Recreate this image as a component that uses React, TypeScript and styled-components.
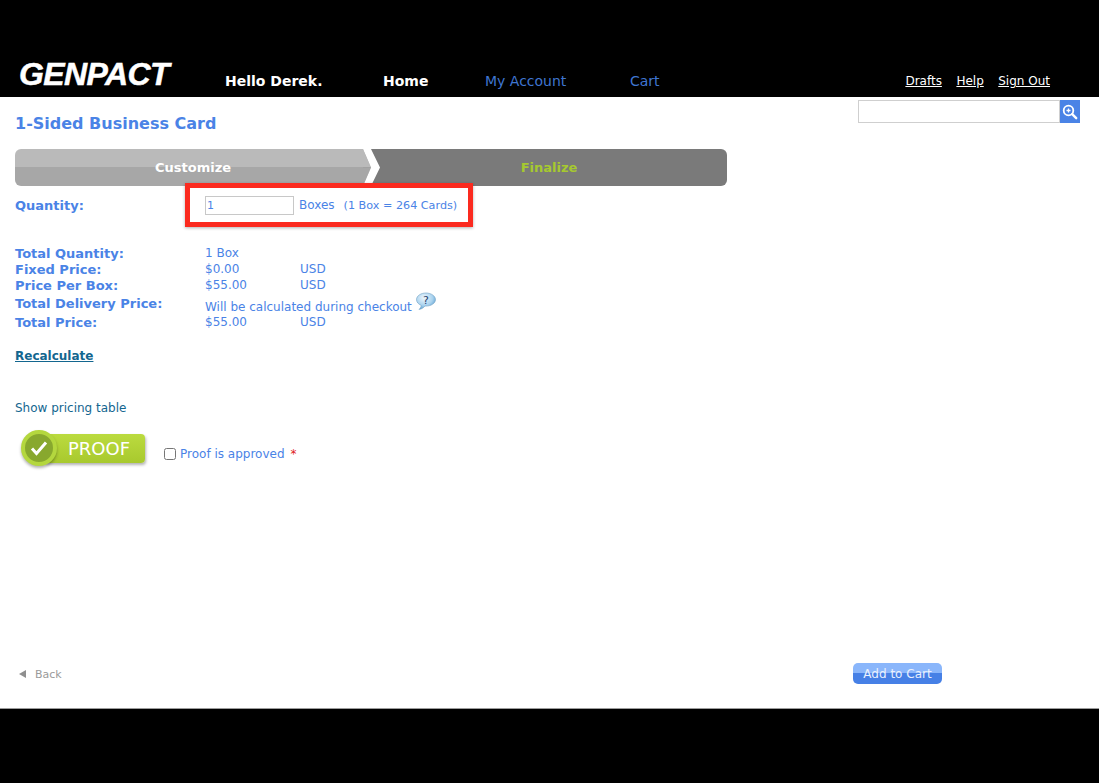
import React from "react";
import styled, { createGlobalStyle } from "styled-components";

const blue = "#4a83e6";
const teal = "#13668f";

const GlobalStyle = createGlobalStyle`
    html, body {
        margin: 0;
        padding: 0;
        background: #000;
    }
    body {
        font-family: "DejaVu Sans", Verdana, sans-serif;
        font-size: 12px;
        color: ${blue};
    }
`;

const priceRows = [
    { label: "Total Quantity:", value: "1 Box" },
    { label: "Fixed Price:", value: "$0.00", unit: "USD" },
    { label: "Price Per Box:", value: "$55.00", unit: "USD" },
];

const App: React.FC = () => {
    return (
        <Page>
            <GlobalStyle />
            <Header>
                <Logo>GENPACT</Logo>
                <Nav>
                    <Greeting>Hello Derek.</Greeting>
                    <NavLink $active $width={102}>Home</NavLink>
                    <NavLink $width={145}>My Account</NavLink>
                    <NavLink>Cart</NavLink>
                </Nav>
                <UtilityNav>
                    <UtilityLink>Drafts</UtilityLink>
                    <UtilityLink>Help</UtilityLink>
                    <UtilityLink>Sign Out</UtilityLink>
                </UtilityNav>
            </Header>
            <Main>
                <Content>
                    <Title>1-Sided Business Card</Title>
                    <Steps>
                        <StepDone>Customize</StepDone>
                        <StepArrow viewBox="0 0 17 37" preserveAspectRatio="none">
                            <polygon points="0,0 8,18.5 0,18.5" fill="#bababa" />
                            <polygon points="0,18.5 8,18.5 0,37" fill="#a7a7a7" />
                            <polygon points="0,0 8,0 17,18.5 8,37 0,37 8,18.5" fill="#fff" />
                        </StepArrow>
                        <StepNext>Finalize</StepNext>
                    </Steps>
                    <QuantityRow>
                        <Label>Quantity:</Label>
                        <QuantityField>
                            <QuantityInput defaultValue="1" />
                            <span>Boxes</span>
                            <QuantityHint>(1 Box = 264 Cards)</QuantityHint>
                        </QuantityField>
                    </QuantityRow>
                    <Prices>
                        {priceRows.map((row) => (
                            <PriceRow key={row.label}>
                                <Label>{row.label}</Label>
                                <PriceValue>{row.value}</PriceValue>
                                <span>{row.unit}</span>
                            </PriceRow>
                        ))}
                        <DeliveryRow>
                            <DeliveryLabel>Total Delivery Price:</DeliveryLabel>
                            <DeliveryValue>Will be calculated during checkout</DeliveryValue>
                            <HelpIcon viewBox="0 0 22 20">
                                <defs>
                                    <radialGradient id="bubble" cx="40%" cy="30%" r="75%">
                                        <stop offset="0" stopColor="#eef7fd" />
                                        <stop offset="0.6" stopColor="#a9d2ee" />
                                        <stop offset="1" stopColor="#4f97cc" />
                                    </radialGradient>
                                </defs>
                                <path d="M11 1C5.8 1 1.500 3.900 1.500 7.600c0 2.500 1.900 4.600 4.700 5.800-.2 1.600-1 3-2.200 4 2.500-.3 4.500-1.500 6-3.400.3 0 .7.100 1 .100 5.200 0 9.500-2.900 9.500-6.500S16.200 1 11 1z" fill="url(#bubble)" stroke="#6f9fc2" strokeWidth="0.6" />
                                <text x="11" y="11.500" textAnchor="middle" fontSize="11" fontWeight="400" fill="#27406b" fontFamily="DejaVu Sans, sans-serif">?</text>
                            </HelpIcon>
                        </DeliveryRow>
                        <PriceRow>
                            <Label>Total Price:</Label>
                            <PriceValue>$55.00</PriceValue>
                            <span>USD</span>
                        </PriceRow>
                    </Prices>
                    <Recalculate>Recalculate</Recalculate>
                    <PricingTable>Show pricing table</PricingTable>
                    <ProofRow>
                        <ProofBadge>
                            <ProofCircle>
                                <svg width="20" height="18" viewBox="0 0 20 18">
                                    <path d="M3 9.500l4.500 5L17 3.500" fill="none" stroke="#fff" strokeWidth="3" />
                                </svg>
                            </ProofCircle>
                            <ProofText>PROOF</ProofText>
                        </ProofBadge>
                        <ProofLabel>
                            <ProofCheck type="checkbox" />
                            Proof is approved<Required>*</Required>
                        </ProofLabel>
                    </ProofRow>
                    <Actions>
                        <BackLink>
                            <BackArrow />
                            Back
                        </BackLink>
                        <AddToCart>Add to Cart</AddToCart>
                    </Actions>
                </Content>
                <SearchBar>
                    <SearchInput />
                    <SearchButton>
                        <svg width="16" height="16" viewBox="0 0 16 16">
                            <circle cx="6.500" cy="6.500" r="4.800" fill="none" stroke="#fff" strokeWidth="1.800" />
                            <path d="M4.500 6.500h4M6.500 4.500v4" stroke="#fff" strokeWidth="1.300" />
                            <path d="M10.200 10.200l4 4" stroke="#fff" strokeWidth="2.400" strokeLinecap="round" />
                        </svg>
                    </SearchButton>
                </SearchBar>
            </Main>
            <Footer />
        </Page>
    );
};

const Page = styled.div`
    display: flex;
    flex-direction: column;
    width: 1099px;
    height: 783px;
    overflow: hidden;
    background: #000;
`;

const Header = styled.header`
    display: flex;
    align-items: flex-end;
    height: 97px;
    flex-shrink: 0;
    background: #000;
    color: #fff;
`;

const Logo = styled.div`
    width: 225px;
    padding: 0 0 6px 19px;
    box-sizing: border-box;
    font-family: "Liberation Sans", Arial, sans-serif;
    font-size: 32px;
    line-height: 34px;
    font-weight: 700;
    font-style: italic;
    letter-spacing: -0.6px;
    -webkit-text-stroke: 0.5px #fff;
`;

const Nav = styled.nav`
    display: flex;
    flex: 1;
    padding-bottom: 7px;
    font-size: 14px;
    line-height: 18px;
`;

const Greeting = styled.span`
    width: 158px;
    font-weight: 700;
`;

const NavLink = styled.a<{ $active?: boolean; $width?: number }>`
    width: ${(props) => (props.$width ? `${props.$width}px` : "auto")};
    font-weight: ${(props) => (props.$active ? 700 : 400)};
    color: ${(props) => (props.$active ? "#fff" : "#3f75d1")};
`;

const UtilityNav = styled.div`
    display: flex;
    gap: 14.500px;
    padding: 0 49px 8px 0;
    line-height: 16px;
`;

const UtilityLink = styled.a`
    color: #fff;
    text-decoration: underline;
`;

const Main = styled.main`
    display: grid;
    grid-template-columns: 1fr;
    height: 611px;
    flex-shrink: 0;
    background: #fff;
`;

const Content = styled.div`
    grid-area: 1 / 1;
    display: flex;
    flex-direction: column;
    width: 942px;
    padding-left: 15px;
    box-sizing: border-box;
`;

const Title = styled.h1`
    margin: 17px 0 15px;
    font-size: 16px;
    line-height: 20px;
    font-weight: 700;
    color: ${blue};
`;

const Steps = styled.div`
    display: flex;
    width: 712px;
    height: 37px;
    flex-shrink: 0;
    font-size: 13px;
    line-height: 37px;
    font-weight: 700;
    text-align: center;
`;

const StepDone = styled.div`
    width: 348px;
    padding-left: 8px;
    box-sizing: border-box;
    border-radius: 6px 0 0 6px;
    background: linear-gradient(#bababa 0 50%, #a7a7a7 50% 100%);
    color: #fff;
`;

const StepArrow = styled.svg`
    display: block;
    width: 17px;
    height: 37px;
    flex-shrink: 0;
    background: #7a7a7a;
`;

const StepNext = styled.div`
    flex: 1;
    padding-right: 9px;
    border-radius: 0 6px 6px 0;
    background: #7a7a7a;
    color: #a6c92f;
`;

const QuantityRow = styled.div`
    display: flex;
    align-items: center;
    height: 38px;
    flex-shrink: 0;
`;

const Label = styled.span`
    width: 190px;
    flex-shrink: 0;
    font-size: 13px;
    font-weight: 700;
    color: ${blue};
`;

const QuantityField = styled.div`
    position: relative;
    display: flex;
    align-items: center;
    font-size: 12px;

    &::after {
        content: "";
        position: absolute;
        left: -20px;
        top: -13px;
        width: 278px;
        height: 34px;
        border: 5px solid #fb2a1f;
        box-shadow: 0 1px 3px rgba(0, 0, 0, 0.3);
        pointer-events: none;
    }
`;

const QuantityInput = styled.input`
    width: 85px;
    height: 17px;
    margin: 0 5px 0 0;
    padding: 0 1px;
    border: 1px solid #c8c8c8;
    outline: none;
    font-family: inherit;
    font-size: 11px;
    color: ${blue};
`;

const QuantityHint = styled.span`
    margin-left: 9px;
    font-size: 11.200px;
`;

const Prices = styled.div`
    display: flex;
    flex-direction: column;
    margin-top: 21px;
`;

const PriceRow = styled.div`
    display: flex;
    align-items: center;
    height: 16px;
`;

const PriceValue = styled.span`
    width: 95px;
`;

const DeliveryRow = styled.div`
    display: flex;
    height: 21px;
    align-items: flex-start;
`;

const DeliveryLabel = styled(Label)`
    margin-top: 3px;
`;

const DeliveryValue = styled.span`
    margin-top: 7px;
`;

const HelpIcon = styled.svg`
    width: 22px;
    height: 20px;
    margin: -1px 0 0 3px;
`;

const Recalculate = styled.a`
    margin-top: 18px;
    font-size: 12px;
    line-height: 16px;
    font-weight: 700;
    color: ${teal};
    text-decoration: underline;
`;

const PricingTable = styled.a`
    margin-top: 36px;
    line-height: 16px;
    color: ${teal};
`;

const ProofRow = styled.div`
    display: flex;
    align-items: center;
    margin-top: 13px;
    padding-left: 6px;
`;

const ProofBadge = styled.div`
    display: flex;
    align-items: center;
    width: 124px;
    margin-right: 1px;
    height: 38px;
    flex-shrink: 0;
`;

const ProofCircle = styled.div`
    display: flex;
    align-items: center;
    justify-content: center;
    width: 28px;
    height: 28px;
    flex-shrink: 0;
    border: 4px solid #b4d73e;
    border-radius: 50%;
    background: #88a82e;
    box-shadow: 0 2px 3px rgba(0, 0, 0, 0.3);
    z-index: 1;
`;

const ProofText = styled.div`
    flex: 1;
    height: 29px;
    margin-left: -12px;
    padding-left: 23px;
    border-radius: 0 4px 4px 0;
    background: linear-gradient(#bbdb3f, #a8c92e);
    box-shadow: 1px 2px 3px rgba(0, 0, 0, 0.3);
    font-size: 18px;
    line-height: 29px;
    color: #fff;
`;

const ProofLabel = styled.label`
    display: flex;
    align-items: center;
    margin: 12px 0 0 18px;
    white-space: pre;
`;

const ProofCheck = styled.input`
    width: 12px;
    height: 12px;
    margin: 0 4px 0 0;
`;

const Required = styled.span`
    margin-left: 6px;
    color: #e02020;
`;

const Actions = styled.div`
    display: flex;
    justify-content: space-between;
    align-items: center;
    margin-top: auto;
    margin-bottom: 24px;
`;

const BackLink = styled.a`
    display: flex;
    align-items: center;
    gap: 9px;
    margin: 1px 0 0 4px;
    font-size: 11px;
    color: #9a9a9a;
`;

const BackArrow = styled.span`
    width: 0;
    height: 0;
    border-top: 4px solid transparent;
    border-bottom: 4px solid transparent;
    border-right: 7px solid #8f8f8f;
`;

const AddToCart = styled.button`
    width: 89px;
    height: 21px;
    padding: 0;
    border: none;
    border-radius: 5px;
    background: linear-gradient(#8ab6fb 0 50%, #4680e6 50% 100%);
    font-family: inherit;
    font-size: 12px;
    color: #eaf1fd;
`;

const SearchBar = styled.div`
    grid-area: 1 / 1;
    justify-self: end;
    align-self: start;
    display: flex;
    margin: 3px 19px 0 0;
`;

const SearchInput = styled.input`
    width: 200px;
    height: 21px;
    padding: 0;
    border: 1px solid #cfcfcf;
    outline: none;
`;

const SearchButton = styled.button`
    display: flex;
    align-items: center;
    justify-content: center;
    width: 20px;
    height: 23px;
    padding: 0;
    border: none;
    background: ${blue};
`;

const Footer = styled.footer`
    flex: 1;
    border-top: 1px solid #9c9c9c;
    background: #000;
`;

export default App;
